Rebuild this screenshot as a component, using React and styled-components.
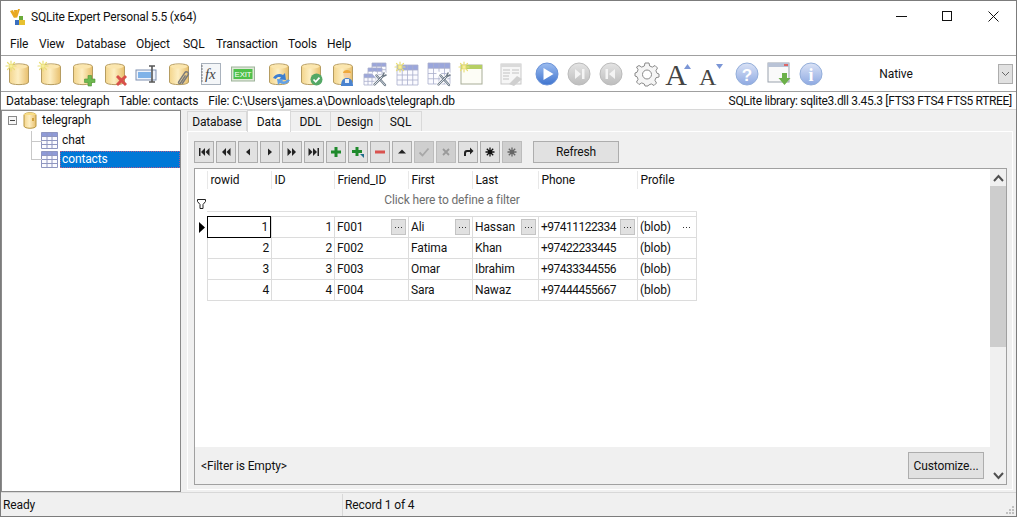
import React from "react";
import styled, { createGlobalStyle } from "styled-components";

const Global = createGlobalStyle`
  html, body { margin: 0; padding: 0; background: #fff; }
  body { font-family: "Roboto", "Liberation Sans", sans-serif; font-size: 12px; color: #111; }
`;

const Hidden = styled.svg`position: absolute; width: 0; height: 0;`;
const Window = styled.div`
  width: 1017px; height: 517px; box-sizing: border-box;
  border: 1px solid #7c7c7c; background: #f0f0f0;
  display: flex; flex-direction: column; overflow: hidden;
  font-size: 12px; line-height: 16px; letter-spacing: -0.12px;
`;
const TitleBar = styled.div`height: 32px; flex: none; background: #fff; display: flex; align-items: center; padding-left: 8px;`;
const TitleText = styled.span`margin-left: 5px; flex: 1; color: #111; letter-spacing: -0.22px;`;
const Control = styled.div`width: 46px; height: 32px; display: flex; align-items: center; justify-content: center; margin-top: -2px;`;
const MenuBar = styled.div`height: 22px; flex: none; background: #fff; border-bottom: 1px solid #a0a0a0; display: flex; align-items: center;`;
const MenuItem = styled.span`width: ${p => p.$w}px; padding-left: ${p => p.$first ? 9 : 0}px; box-sizing: border-box; flex: none;`;
const Toolbar = styled.div`height: 35px; flex: none; background: #fff; border-bottom: 1px solid #a0a0a0; display: flex; align-items: center; padding-left: 2px;`;
const ToolButton = styled.div`width: 32px; height: 35px; flex: none; margin-left: ${p => p.$gap || 0}px; display: flex; align-items: center; justify-content: center;`;
const Combo = styled.div`margin-left: 3px; flex: 1; height: 22px; display: flex; align-items: center; padding-right: 3px;`;
const ComboText = styled.span`flex: 1; text-align: center; padding-right: 36px;`;
const ComboArrow = styled.div`width: 15px; height: 20px; box-sizing: border-box; background: #e1e1e1; border: 1px solid #adadad; display: flex; align-items: center; justify-content: center;`;
const InfoBar = styled.div`height: 17px; flex: none; background: #fff; border-bottom: 1px solid #d8d8d8; display: flex; align-items: center; padding: 0 4px 0 5px;`;
const InfoItem = styled.span`margin-right: ${p => p.$mr || 0}px; white-space: nowrap; letter-spacing: ${p => p.$tight ? -0.31 : -0.17}px;`;
const Spacer = styled.div`flex: 1;`;
const Main = styled.div`flex: 1; display: flex; min-height: 0;`;
const TreePanel = styled.div`
  width: 180px; flex: none; box-sizing: border-box; background: #fff;
  border: 1px solid #8a8a8a; margin-right: 1px;
`;
const TreeRow = styled.div`
  position: relative; height: 19.5px; display: flex; align-items: center; padding-left: ${p => p.$indent}px;
`;
const Expander = styled.span`
  width: 9px; height: 9px; box-sizing: border-box; border: 1px solid #8a8a8a; background: #f6f6f6;
  display: flex; align-items: center; justify-content: center; margin-right: 6px;
  &::before { content: ""; width: 5px; height: 1px; background: #444; }
`;
const Branch = styled.span`
  position: absolute; left: 29px; top: ${p => p.$top}px; height: ${p => p.$h}px; width: 10px;
  border-left: 1px solid #c8c8c8; border-bottom: 1px solid #c8c8c8;
`;
const TreeLabel = styled.span`
  margin-left: ${p => p.$ml || 0}px; height: 17px; line-height: 16px; box-sizing: border-box; padding: 0 2px;
  ${p => p.$selected ? `flex: 1; background: #0078d7; color: #fff; outline: 1px dotted #b05a8a; outline-offset: -1px;` : ""}
`;
const RightPanel = styled.div`flex: 1; min-width: 0; display: flex; flex-direction: column; padding: 0 3px 2px 5px;`;
const TabStrip = styled.div`height: 21px; flex: none; display: flex; align-items: flex-end; position: relative; z-index: 1;`;
const Tab = styled.div`
  box-sizing: border-box; width: ${p => p.$w}px; display: flex; justify-content: center; align-items: center;
  height: ${p => p.$active ? 22 : 20}px; margin-bottom: ${p => p.$active ? -1 : 0}px;
  background: ${p => p.$active ? "#fff" : "#f0f0f0"};
  border: 1px solid #d9d9d9; border-bottom: none; border-left-width: ${p => p.$active || p.$first ? 1 : 0}px;
  padding-top: ${p => p.$active ? 0 : 1}px;
`;
const Page = styled.div`flex: 1; min-height: 0; box-sizing: border-box; border: 1px solid #fff; background: #f0f0f0; padding: 9px 5px 4px 6px; display: flex; flex-direction: column;`;
const DataBar = styled.div`height: 22px; flex: none; display: flex; gap: 2px;`;
const NavButton = styled.div`
  width: 20px; height: 22px; box-sizing: border-box; background: ${p => p.$disabled ? "#cfcfcf" : "#e1e1e1"};
  border: 1px solid ${p => p.$disabled ? "#bcbcbc" : "#adadad"}; display: flex; align-items: center; justify-content: center; flex: none;
`;
const RefreshButton = styled.div`
  margin-left: 9px; width: 86px; height: 22px; box-sizing: border-box; background: #e1e1e1; border: 1px solid #adadad;
  display: flex; align-items: center; justify-content: center;
`;
const GridFrame = styled.div`
  margin-top: 5px; flex: 1; min-height: 0; display: flex; background: #fff; border: 1px solid #a0a0a0;
`;
const GridBody = styled.div`flex: 1; min-width: 0; display: flex; flex-direction: column;`;
const cols = "12px 64px 63px 74px 64px 66px 99px 60px";
const HeadRow = styled.div`display: grid; grid-template-columns: ${cols}; height: 21px; flex: none; align-items: stretch;`;
const HeadCell = styled.div`border-left: 1px solid #e8e8e8; padding-left: 2.5px; margin-top: 2px; height: 18px; display: flex; align-items: center;`;
const FilterRow = styled.div`
  display: grid; grid-template-columns: 12px 490px; height: 22px; flex: none; align-items: center; box-sizing: border-box;
`;
const FilterHint = styled.div`text-align: center; color: #6e6e6e; border-bottom: 1px solid #e0e0e0; height: 22px; line-height: 21px; box-sizing: border-box;`;
const FilterMark = styled.div`display: flex; align-items: flex-end; height: 22px; padding: 0 0 3px 2px; box-sizing: border-box;`;
const Rows = styled.div`flex: 1; min-height: 0; padding-top: 4px; position: relative;`;
const RowEdge = styled.div`position: absolute; left: 501px; top: 0; height: 4px; width: 0; border-right: 1px solid #dcdcdc;`;
const Row = styled.div`display: grid; grid-template-columns: ${cols}; height: ${p => p.$top ? 22 : 21}px;`;
const Indicator = styled.div`display: flex; align-items: center; padding-left: 4px;`;
const Cell = styled.div`
  box-sizing: border-box; display: flex; align-items: center; padding: 0 2px;
  justify-content: ${p => p.$right ? "flex-end" : "space-between"};
  border-left: 1px solid #dcdcdc; border-bottom: 1px solid #dcdcdc;
  ${p => p.$first ? "border-top: 1px solid #dcdcdc;" : ""}
  ${p => p.$last ? "border-right: 1px solid #dcdcdc;" : ""}
  ${p => p.$focus ? "outline: 1px solid #000; outline-offset: -1px; padding-right: 3px;" : ""}
  ${p => p.$tight ? "letter-spacing: -0.5px;" : ""}
`;
const DotsButton = styled.span`
  width: 15px; height: 16px; box-sizing: border-box; flex: none;
  background: ${p => p.$plain ? "transparent" : "#e1e1e1"}; border: 1px solid ${p => p.$plain ? "transparent" : "#c4c4c4"};
  display: flex; align-items: center; justify-content: center;
`;
const Footer = styled.div`height: 37px; flex: none; background: #f0f0f0; display: flex; align-items: center; padding: 0 6px; justify-content: space-between;`;
const Customize = styled.div`width: 76px; height: 27px; box-sizing: border-box; background: #e1e1e1; border: 1px solid #adadad; display: flex; align-items: center; justify-content: center;`;
const Scrollbar = styled.div`width: 16px; flex: none; background: #f0f0f0; display: flex; flex-direction: column;`;
const ScrollArrow = styled.div`height: 17px; flex: none; display: flex; align-items: center; justify-content: center;`;
const ScrollThumb = styled.div`height: 161px; flex: none; background: #cdcdcd;`;
const StatusBar = styled.div`height: 24px; flex: none; box-sizing: border-box; border-top: 1px solid #d8d8d8; display: flex; align-items: center; position: relative;`;
const StatusCell = styled.div`width: ${p => p.$w}px; box-sizing: border-box; padding: 1px 0 0 2px; height: 22px; display: flex; align-items: center; ${p => p.$divider ? "border-left: 1px solid #d8d8d8;" : ""}`;
const Grip = styled.div`position: absolute; right: 1px; bottom: 1px; width: 10px; height: 10px; display: flex; align-items: flex-end;`;
const IconSvg = styled.svg`overflow: visible; flex: none;`;

const Defs = () => (
  <Hidden aria-hidden="true">
    <defs>
      <linearGradient id="cyl" x1="0" x2="1" y1="0" y2="0">
        <stop offset="0" stopColor="#f3d58c" /><stop offset=".45" stopColor="#fdeec2" /><stop offset="1" stopColor="#e8bf6c" />
      </linearGradient>
      <linearGradient id="ball" x1="0" x2="0" y1="0" y2="1">
        <stop offset="0" stopColor="#9dbdf0" /><stop offset="1" stopColor="#3f74cf" />
      </linearGradient>
      <linearGradient id="pale" x1="0" x2="0" y1="0" y2="1">
        <stop offset="0" stopColor="#dbe3f6" /><stop offset="1" stopColor="#8ea9e2" />
      </linearGradient>
      <linearGradient id="grey" x1="0" x2="0" y1="0" y2="1">
        <stop offset="0" stopColor="#e4e4e4" /><stop offset="1" stopColor="#bdbdbd" />
      </linearGradient>
    </defs>
  </Hidden>
);

const Ic = ({ children, s = 24 }) => <IconSvg width={s} height={s} viewBox="0 0 24 24">{children}</IconSvg>;
const Star = ({ x = 0, y = 0 }) => (
  <g transform={`translate(${x} ${y})`} stroke="#eadf78" strokeWidth="1.2" strokeLinecap="round">
    <path d="M5 0v10M0 5h10M1.5 1.5l7 7M8.5 1.5l-7 7" />
    <circle cx="5" cy="5" r="1.6" fill="#f7ef9a" stroke="none" />
  </g>
);
const CylBody = () => (
  <g>
    <path d="M2.5 4.5C2.5 1 21.5 1 21.5 4.5V20C21.5 23.5 2.5 23.5 2.5 20Z" fill="url(#cyl)" stroke="#b69d62" strokeWidth="1" />
    <ellipse cx="12" cy="4.5" rx="8.5" ry="2" fill="#fbe6ae" />
  </g>
);
const Plus = () => <path d="M17 13.5h3.5V17H24v3.5h-3.5V24H17v-3.5h-3.5V17H17z" fill="#6db84f" stroke="#4d9636" strokeWidth=".6" />;
const Cross = () => <path d="M13 15l2-2 3.5 3.3L22 13l2 2-3.4 3.5L24 22l-2 2-3.5-3.4L15 24l-2-2 3.4-3.5z" fill="#d8504a" />;
const Db = ({ star, children }) => <Ic><CylBody />{star && <Star x={-1} y={-1} />}{children}</Ic>;

const FieldIcon = () => (
  <Ic>
    <rect x="1" y="8" width="20" height="10" fill="#eef3fb" stroke="#7e8fb0" />
    <rect x="3" y="10" width="13" height="6" fill="#7fb2e8" />
    <path d="M14 4h6M17 4v16M14 20h6" stroke="#555" strokeWidth="1.6" fill="none" />
  </Ic>
);
const ClipIcon = () => (
  <Db>
    <path d="M15 22l6-9c1.6-2.4-1.8-4.5-3.3-2.2l-6 9c-.8 1.3 1 2.4 1.8 1.2l5-7.6" fill="none" stroke="#7b7b7b" strokeWidth="1.5" />
  </Db>
);
const FxIcon = () => (
  <Ic>
    <rect x="2.5" y="1.5" width="19" height="21" fill="#f4f6f8" stroke="#a9b2bd" />
    <path d="M2 4h2M2 7h2M2 10h2M2 13h2M2 16h2M2 19h2" stroke="#666" strokeWidth=".8" />
    <text x="6" y="17" fontFamily="'Liberation Serif', serif" fontStyle="italic" fontSize="15" fill="#444">fx</text>
  </Ic>
);
const ExitIcon = () => (
  <Ic>
    <rect x=".5" y="5" width="23" height="14" fill="#dfe8d8" stroke="#9db39a" />
    <rect x="2.5" y="7" width="19" height="10" fill="#4fc04a" />
    <text x="12" y="15.2" textAnchor="middle" fontFamily="'Liberation Sans', sans-serif" fontSize="7.8" fill="#fff">EXIT</text>
  </Ic>
);
const SyncIcon = () => (
  <Db>
    <path d="M6 16c2-4 7-5 10-3l2-2 1 7-7-.5 2-2c-2-1-4-.5-5 1.5z" fill="#3d7fd0" />
    <path d="M23 18c-2 4-7 5-10 3l-2 2-1-6 7 .5-2 1.5c2 1 4 .5 5-1.5z" fill="#62a0e6" />
  </Db>
);
const CheckIcon = () => (
  <Db>
    <circle cx="17.5" cy="17.5" r="6" fill="#54a866" />
    <path d="M14.5 17.5l2.2 2.3 3.8-4.2" fill="none" stroke="#fff" strokeWidth="1.7" />
  </Db>
);
const WorkerIcon = () => (
  <Db>
    <circle cx="16" cy="12.5" r="3.4" fill="#f5cfa1" />
    <path d="M12 11c0-4 8-4 8 0z" fill="#eea93c" />
    <path d="M10 24c0-6 2.5-8 6-8s6 2 6 8z" fill="#4a83cf" />
    <path d="M14 17h4v4h-4z" fill="#e8f0fb" />
  </Db>
);
const Grid = ({ x, y, w, h, cols: c = 3, rows: r = 3 }) => {
  const cw = w / c, rh = h / r, d = [];
  for (let i = 0; i <= c; i++) d.push(`M${x + i * cw} ${y}v${h}`);
  for (let j = 0; j <= r; j++) d.push(`M${x} ${y + j * rh}h${w}`);
  return (
    <g>
      <rect x={x} y={y} width={w} height={h} fill="#fbfbff" />
      <rect x={x} y={y} width={w} height={rh} fill="#9aa6dc" />
      <path d={d.join("")} stroke="#a9afcb" strokeWidth=".8" fill="none" />
    </g>
  );
};
const Tools = () => (
  <g fill="none" strokeLinecap="round">
    <path d="M11.500 22.500L22 12" stroke="#fff" strokeWidth="4" />
    <path d="M11.500 11.500L22 23" stroke="#fff" strokeWidth="4" />
    <path d="M13.500 13.500L22 23" stroke="#6f7b88" strokeWidth="2.400" />
    <path d="M13.500 13.500L22 23" stroke="#c9d2da" strokeWidth="1" />
    <path d="M11.500 22.500L19 15" stroke="#6f7b88" strokeWidth="2.400" />
    <path d="M19 15l2-4M19 15l4-2" stroke="#6f7b88" strokeWidth="1.600" />
    <path d="M11.500 22.500L19 15" stroke="#dfe5ea" strokeWidth="1" />
  </g>
);
const TablesTools = () => <Ic><Grid x={9} y={1} w={14} h={10} /><Grid x={5} y={6} w={14} h={10} /><Grid x={1} y={12} w={12} h={11} /><Tools /></Ic>;
const TableNew = () => <Ic><Grid x={2} y={3} w={21} h={20} cols={4} rows={4} /><Star x={0} y={0} /></Ic>;
const TableTools = () => <Ic><Grid x={1} y={1} w={22} h={21} cols={4} rows={4} /><Tools /></Ic>;
const ViewNew = () => (
  <Ic>
    <rect x="2" y="3" width="21" height="19" fill="#fdfdf6" stroke="#a8ad98" />
    <rect x="2" y="3" width="21" height="4" fill="#b6cf64" />
    <Star x={0} y={0} />
  </Ic>
);
const Report = () => (
  <Ic>
    <rect x="2" y="2" width="20" height="20" fill="#f6f6f6" stroke="#c9c9c9" />
    <rect x="2" y="2" width="20" height="3" fill="#dadada" />
    <path d="M4 8h7M13 8h7M4 11h7M13 11h7M4 14h6M4 17h6" stroke="#c2c2c2" strokeWidth="1" />
    <path d="M10 22l8-8 5 3-8 7z" fill="#cfcfcf" />
  </Ic>
);
const Round = ({ fill, stroke = "#93aeda", children }) => <Ic><circle cx="12" cy="12" r="11" fill={fill} stroke={stroke} />{children}</Ic>;
const Gear = () => (
  <Ic>
    <path d="M10 1h4l.7 3 2.6 1.1L20 3.5 22.500 6l-1.600 2.700L22 11.300l2 .7v3l-3 .7-1.100 2.600 1.600 2.700-2.500 2.500-2.700-1.600-2.600 1.100-.7 1H10l-.7-2-2.600-1.100L4 22.500 1.500 20l1.600-2.700L2 14.700 0 14v-3l2-.7 1.100-2.600L1.500 5 4 3.500l2.700 1.600L9.300 4z" fill="#f5f5f5" stroke="#8a8a8a" strokeWidth="1" />
    <circle cx="12" cy="12.500" r="4.500" fill="#fff" stroke="#8a8a8a" />
  </Ic>
);
const BigA = ({ up }) => (
  <Ic>
    <text x={up ? 9 : 8.5} y="22.500" textAnchor="middle" fontFamily="'Liberation Serif', serif" fontSize={up ? 30 : 24} fill="#444">A</text>
    <path d={up ? "M17 7l3.500-5 3.500 5z" : "M17 2h7l-3.500 5z"} fill="#7b96d6" />
  </Ic>
);
const Download = () => (
  <Ic>
    <rect x="1" y="1" width="21" height="19" fill="#fafafa" stroke="#9aa2ad" />
    <rect x="1" y="1" width="21" height="4" fill="#b9c3d6" />
    <rect x="17" y="2" width="4" height="2" fill="#d66" />
    <path d="M15 11h5v5h3.500l-6 7-6-7H15z" fill="#6cb04a" />
  </Ic>
);
const Logo = () => (
  <svg width="17" height="17" viewBox="0 0 17 17">
    <path d="M1 2l3-1 3 7-2 1zM5 1h3.500L7 9 5.500 8zM9 0h2L8 9 7 8z" fill="#e8a820" />
    <rect x="6" y="11" width="4" height="5" fill="#3a6fc0" />
    <rect x="10" y="7" width="4" height="4" fill="#6bab3a" />
    <rect x="10" y="11" width="6" height="5" fill="#e7c130" />
  </svg>
);

const toolbar = [
  [<Db star />], [<Db star />], [<Db><Plus /></Db>], [<Db><Cross /></Db>], [<FieldIcon />], [<ClipIcon />], [<FxIcon />], [<ExitIcon />],
  [<SyncIcon />, 4], [<CheckIcon />], [<WorkerIcon />], [<TablesTools />], [<TableNew />], [<TableTools />], [<ViewNew />],
  [<Report />, 8],
  [<Round fill="url(#ball)" stroke="#6b93d8"><path d="M8.500 6l10 6-10 6z" fill="#fff" /></Round>, 4],
  [<Round fill="url(#grey)" stroke="#bbb"><path d="M8 7l6 5-6 5zM15 7h2.500v10H15z" fill="#f4f4f4" /></Round>],
  [<Round fill="url(#grey)" stroke="#bbb"><path d="M16 7l-6 5 6 5zM9 7H6.500v10H9z" fill="#f4f4f4" /></Round>],
  [<Gear />, 4], [<BigA up />], [<BigA />],
  [<Round fill="url(#pale)"><text x="12" y="18.500" textAnchor="middle" fontFamily="'Liberation Sans', sans-serif" fontWeight="700" fontSize="17" fill="#fff">?</text></Round>, 4],
  [<Download />],
  [<Round fill="url(#pale)"><text x="12" y="18.500" textAnchor="middle" fontFamily="'Liberation Serif', serif" fontWeight="700" fontSize="18" fill="#fff">i</text></Round>],
];

const G = ({ children }) => <svg width="12" height="12" viewBox="0 0 12 12">{children}</svg>;
const Burst = ({ fill }) => (
  <G>
    <path d="M6 1.500v9M1.500 6h9M2.800 2.800l6.400 6.400M9.200 2.800l-6.400 6.400" stroke={fill} strokeWidth="1.300" />
    <circle cx="6" cy="6" r="2" fill={fill} />
  </G>
);
const navs = [
  [<G><path d="M1 2h1.500v8H1zM7 2v8L3 6zM11.500 2v8l-4-4z" fill="#222" /></G>],
  [<G><path d="M6 2v8L2 6zM10.500 2v8l-4-4z" fill="#222" /></G>],
  [<G><path d="M8 2.500v7L4 6z" fill="#222" /></G>],
  [<G><path d="M4 2.500v7L8 6z" fill="#222" /></G>],
  [<G><path d="M1.500 2v8l4-4zM6 2v8l4-4z" fill="#222" /></G>],
  [<G><path d="M.5 2v8l4-4zM5 2v8l4-4zM9.500 2H11v8H9.500z" fill="#222" /></G>],
  [<G><path d="M4.500 1h3v3.500H11v3H7.500V11h-3V7.500H1v-3h3.500z" fill="#1f8a2c" /></G>],
  [<G><path d="M3.500 1h3v3H10v3H6.500v3h-3V7H0V4h3.500z" fill="#1f8a2c" /><path d="M8 8h4v4z" fill="#1f6d8a" /></G>],
  [<G><rect x="1" y="4.500" width="10" height="3" fill="#d9534f" /></G>],
  [<G><path d="M6 3.500L10 7.500H2z" fill="#222" /></G>],
  [<G><path d="M1.500 6.500l3 3 6-7" fill="none" stroke="#a8a8a8" strokeWidth="1.800" /></G>, true],
  [<G><path d="M3 3l6 6M9 3l-6 6" fill="none" stroke="#9a9a9a" strokeWidth="1.800" /></G>, true],
  [<G><path d="M2 10V7c0-2 1-3 3-3h3V1.500L11.500 5 8 8.500V6H5.500C4.500 6 4 6.500 4 7.500V10z" fill="#222" /></G>],
  [<Burst fill="#111" />],
  [<Burst fill="#666" />, true],
];

const TableGlyph = () => (
  <svg width="17" height="17" viewBox="0 0 17 17">
    <rect x=".5" y=".5" width="16" height="16" fill="#fbfbff" />
    <rect x=".5" y=".5" width="16" height="4" fill="#8e9ad8" />
    <path d="M.5.5h16v16H.5zM.5 4.500h16M.5 8.500h16M.5 12.500h16M6 .5v16M11 .5v16" fill="none" stroke="#8f96c0" />
  </svg>
);
const DbGlyph = () => (
  <svg width="14" height="17" viewBox="0 0 14 17">
    <path d="M1 3C1 0 13 0 13 3V14C13 17 1 17 1 14Z" fill="url(#cyl)" stroke="#b8963f" />
    <path d="M1 3C1 0 13 0 13 3" fill="#f9dd85" />
    <rect x="9" y="6" width="2" height="3" fill="#d2a13c" />
  </svg>
);
const Dots = () => <svg width="9" height="3" viewBox="0 0 9 3"><path d="M1 1h1v1H1zM4 1h1v1H4zM7 1h1v1H7z" fill="#333" /></svg>;
const Tri = () => <svg width="6" height="11" viewBox="0 0 6 11"><path d="M0 0l6 5.500L0 11z" fill="#000" /></svg>;
const Funnel = () => <svg width="9" height="10" viewBox="0 0 9 10"><path d="M.5.500h8v2L6 5.500v4H3v-4L.5 2.500z" fill="#fff" stroke="#222" /></svg>;
const Chev = ({ up }) => <svg width="11" height="8" viewBox="0 0 11 8"><path d={up ? "M1 7l4.500-5L10 7" : "M1 1l4.500 5L10 1"} fill="none" stroke="#505050" strokeWidth="2" /></svg>;

const records = [
  ["1", "1", "F001", "Ali", "Hassan", "+97411122334"],
  ["2", "2", "F002", "Fatima", "Khan", "+97422233445"],
  ["3", "3", "F003", "Omar", "Ibrahim", "+97433344556"],
  ["4", "4", "F004", "Sara", "Nawaz", "+97444455667"],
];
const menus = [["File", 38], ["View", 37], ["Database", 60], ["Object", 47], ["SQL", 33], ["Transaction", 72], ["Tools", 39], ["Help", 40]];
const tabs = [["Database", 60], ["Data", 44], ["DDL", 40], ["Design", 49], ["SQL", 42]];

export default function App() {
  return (
    <>
      <Global />
      <Defs />
      <Window>
        <TitleBar>
          <Logo />
          <TitleText>SQLite Expert Personal 5.5 (x64)</TitleText>
          <Control><svg width="11" height="11" viewBox="0 0 11 11"><path d="M0 5.500h11" stroke="#111" /></svg></Control>
          <Control><svg width="10" height="10" viewBox="0 0 10 10"><rect x=".5" y=".5" width="9" height="9" fill="none" stroke="#111" /></svg></Control>
          <Control><svg width="11" height="11" viewBox="0 0 11 11"><path d="M.5.500l10 10M10.500.500l-10 10" stroke="#111" /></svg></Control>
        </TitleBar>
        <MenuBar>
          {menus.map(([m, w], i) => <MenuItem key={m} $w={w} $first={i === 0}>{m}</MenuItem>)}
        </MenuBar>
        <Toolbar>
          {toolbar.map(([icon, gap], i) => <ToolButton key={i} $gap={gap}>{icon}</ToolButton>)}
          <Combo>
            <ComboText>Native</ComboText>
            <ComboArrow><svg width="9" height="6" viewBox="0 0 9 6"><path d="M1 1l3.500 3.500L8 1" fill="none" stroke="#666" /></svg></ComboArrow>
          </Combo>
        </Toolbar>
        <InfoBar>
          <InfoItem $mr={10}>Database: telegraph</InfoItem>
          <InfoItem $mr={10}>Table: contacts</InfoItem>
          <InfoItem>File: C:\Users\james.a\Downloads\telegraph.db</InfoItem>
          <Spacer />
          <InfoItem $tight>SQLite library: sqlite3.dll 3.45.3 [FTS3 FTS4 FTS5 RTREE]</InfoItem>
        </InfoBar>
        <Main>
          <TreePanel>
            <TreeRow $indent={6}>
              <Expander /><DbGlyph /><TreeLabel $ml={3}>telegraph</TreeLabel>
            </TreeRow>
            <TreeRow $indent={39}>
              <Branch $top={0} $h={10} />
              <TableGlyph /><TreeLabel $ml={2}>chat</TreeLabel>
            </TreeRow>
            <TreeRow $indent={39}>
              <Branch $top={-10} $h={19} />
              <TableGlyph /><TreeLabel $ml={2} $selected>contacts</TreeLabel>
            </TreeRow>
          </TreePanel>
          <RightPanel>
            <TabStrip>
              {tabs.map(([t, w], i) => <Tab key={t} $w={w} $first={i === 0} $active={t === "Data"}>{t}</Tab>)}
            </TabStrip>
            <Page>
              <DataBar>
                {navs.map(([icon, dis], i) => <NavButton key={i} $disabled={dis}>{icon}</NavButton>)}
                <RefreshButton>Refresh</RefreshButton>
              </DataBar>
              <GridFrame>
                <GridBody>
                  <HeadRow>
                    <div />
                    {["rowid", "ID", "Friend_ID", "First", "Last", "Phone", "Profile"].map(h => <HeadCell key={h}>{h}</HeadCell>)}
                  </HeadRow>
                  <FilterRow>
                    <FilterMark><Funnel /></FilterMark>
                    <FilterHint>Click here to define a filter</FilterHint>
                  </FilterRow>
                  <Rows>
                    <RowEdge />
                    {records.map((r, i) => (
                      <Row key={r[0]} $top={i === 0}>
                        <Indicator>{i === 0 && <Tri />}</Indicator>
                        <Cell $right $focus={i === 0} $first={i === 0}>{r[0]}</Cell>
                        <Cell $right $first={i === 0}>{r[1]}</Cell>
                        {r.slice(2).map((v, j) => (
                          <Cell key={v} $first={i === 0} $tight={j === 3}>
                            {v}
                            {i === 0 && <DotsButton><Dots /></DotsButton>}
                          </Cell>
                        ))}
                        <Cell $last $first={i === 0}>
                          (blob)
                          {i === 0 && <DotsButton $plain><Dots /></DotsButton>}
                        </Cell>
                      </Row>
                    ))}
                  </Rows>
                  <Footer>
                    <span>&lt;Filter is Empty&gt;</span>
                    <Customize>Customize...</Customize>
                  </Footer>
                </GridBody>
                <Scrollbar>
                  <ScrollArrow><Chev up /></ScrollArrow>
                  <ScrollThumb />
                  <Spacer />
                  <ScrollArrow><Chev /></ScrollArrow>
                </Scrollbar>
              </GridFrame>
            </Page>
          </RightPanel>
        </Main>
        <StatusBar>
          <StatusCell $w={341}>Ready</StatusCell>
          <StatusCell $divider>Record 1 of 4</StatusCell>
          <Grip>
            <svg width="10" height="10" viewBox="0 0 10 10"><path d="M7 1h2v2H7zM4 4h2v2H4zM7 4h2v2H7zM1 7h2v2H1zM4 7h2v2H4zM7 7h2v2H7z" fill="#c0c0c0" /></svg>
          </Grip>
        </StatusBar>
      </Window>
    </>
  );
}
